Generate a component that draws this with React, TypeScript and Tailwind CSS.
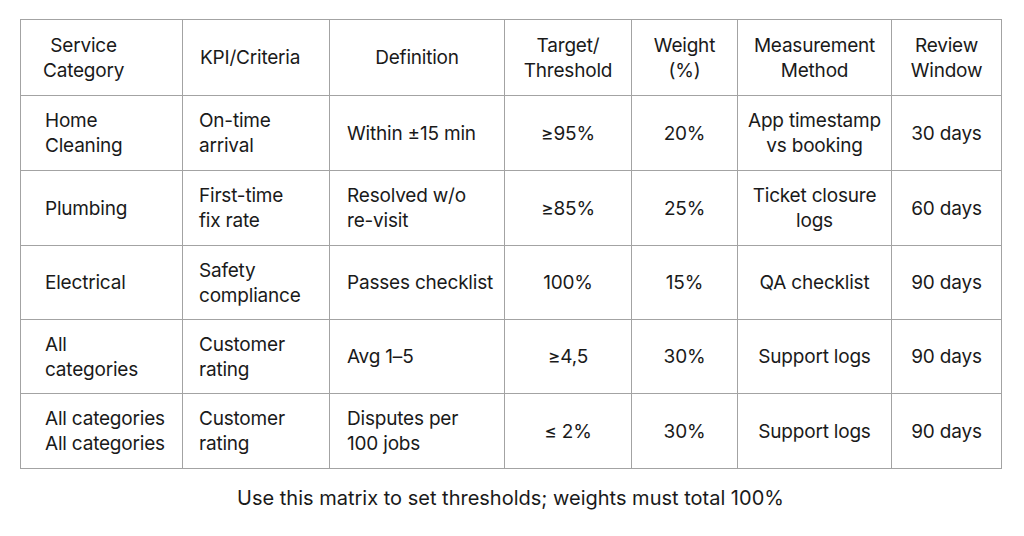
const COLS = ["w-[162px]", "w-[147px]", "w-[175px]", "w-[127px]", "w-[106px]", "w-[154px]", "w-[110px]"];

const HEADERS = [
    ["Service", "Category"],
    ["KPI/Criteria"],
    ["Definition"],
    ["Target/", "Threshold"],
    ["Weight", "(%)"],
    ["Measurement", "Method"],
    ["Review", "Window"],
];

const ROWS = [
    { cat: ["Home", "Cleaning"], kpi: ["On-time", "arrival"], def: ["Within ±15 min"], target: "≥95%", weight: "20%", method: ["App timestamp", "vs booking"], window: "30 days" },
    { cat: ["Plumbing"], kpi: ["First-time", "fix rate"], def: ["Resolved w/o", "re-visit"], target: "≥85%", weight: "25%", method: ["Ticket closure", "logs"], window: "60 days" },
    { cat: ["Electrical"], kpi: ["Safety", "compliance"], def: ["Passes checklist"], target: "100%", weight: "15%", method: ["QA checklist"], window: "90 days" },
    { cat: ["All", "categories"], kpi: ["Customer", "rating"], def: ["Avg 1–5"], target: "≥4,5", weight: "30%", method: ["Support logs"], window: "90 days" },
    { cat: ["All categories", "All categories"], kpi: ["Customer", "rating"], def: ["Disputes per", "100 jobs"], target: "≤ 2%", weight: "30%", method: ["Support logs"], window: "90 days" },
];

const Lines = ({ lines }: { lines: string[] }) => (
    <>
        {lines.map((l, i) => (
            <div key={i}>{l}</div>
        ))}
    </>
);

export default function App() {
    return (
        <div className="w-[1024px] h-[536px] bg-white text-[#1a1a1a] font-['Inter',sans-serif] text-[19px] leading-[25px] tracking-[-0.2px] pt-[19px] pl-[20px]">
            <table className="border-collapse table-fixed w-[981px]">
                <colgroup>
                    {COLS.map((c, i) => (
                        <col key={i} className={c} />
                    ))}
                </colgroup>
                <thead>
                    <tr className="h-[76px]">
                        {HEADERS.map((h, i) => (
                            <th
                                key={i}
                                className={`border border-[#a3a3a3] font-normal align-middle ${i === 0 ? "text-left pl-[22px]" : i === 1 ? "text-left pl-[17px]" : "text-center"}`}
                            >
                                {i === 0 ? (
                                    <div className="inline-block text-center">
                                        <Lines lines={h} />
                                    </div>
                                ) : (
                                    <Lines lines={h} />
                                )}
                            </th>
                        ))}
                    </tr>
                </thead>
                <tbody>
                    {ROWS.map((r, i) => (
                        <tr key={i} className={i === 2 || i === 3 ? "h-[74px]" : "h-[75px]"}>
                            <td className="border border-[#a3a3a3] pl-[24px] align-middle">
                                <Lines lines={r.cat} />
                            </td>
                            <td className="border border-[#a3a3a3] pl-[16px] align-middle">
                                <Lines lines={r.kpi} />
                            </td>
                            <td className="border border-[#a3a3a3] pl-[17px] align-middle">
                                <Lines lines={r.def} />
                            </td>
                            <td className="border border-[#a3a3a3] text-center align-middle">{r.target}</td>
                            <td className="border border-[#a3a3a3] text-center align-middle">{r.weight}</td>
                            <td className="border border-[#a3a3a3] text-center align-middle">
                                <Lines lines={r.method} />
                            </td>
                            <td className="border border-[#a3a3a3] text-center align-middle">{r.window}</td>
                        </tr>
                    ))}
                </tbody>
            </table>
            <p className="mt-[17px] w-[981px] text-center text-[20px] tracking-normal">Use this matrix to set thresholds; weights must total 100%</p>
        </div>
    );
}
